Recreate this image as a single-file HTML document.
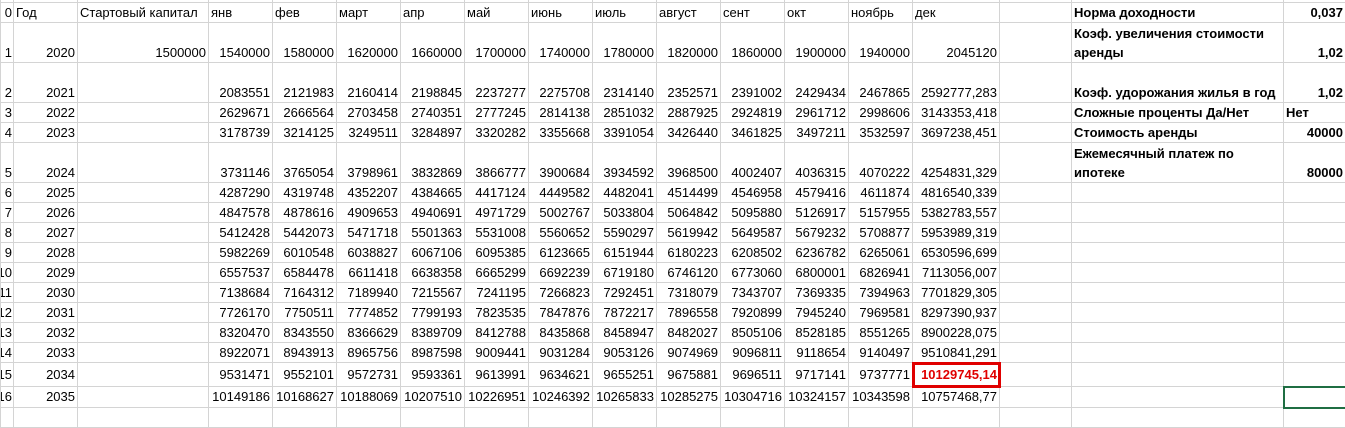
<!DOCTYPE html>
<html><head><meta charset="utf-8"><style>
body{margin:0;background:#fff;width:1345px;height:412px;overflow:hidden;position:relative;font-family:"Liberation Sans",Arial,sans-serif;font-size:13px;color:#000}
table{position:absolute;left:0;top:0;border-collapse:collapse;table-layout:fixed;width:1345px}
td{border:1px solid #d4d4d4;padding:0 2px 1px 2px;vertical-align:bottom;white-space:nowrap;overflow:hidden;text-align:right;line-height:16px}
td.l{text-align:left}
td.n{direction:rtl;text-align:right;padding:0 1px 1px 0}
td.b{font-weight:bold}
td.two{line-height:19px;padding-bottom:0}
tr.t td{height:2px;padding:0;border-top:none}
tr.s td{height:18px}
tr.d td{height:38px}
tr.r td{height:18px}
tr.r15 td{height:20px;padding-bottom:3px}
tr.r16 td{height:18px;padding-bottom:2px}
td.redtxt{color:#e00000;font-weight:bold;outline:3px solid #e00000;outline-offset:-2px}
td.sel{outline:2px solid #1f6e43;outline-offset:-1px}
</style></head><body>
<table>
<colgroup><col style="width:13px"><col style="width:64px"><col style="width:131px"><col style="width:64px"><col style="width:64px"><col style="width:64px"><col style="width:64px"><col style="width:64px"><col style="width:64px"><col style="width:64px"><col style="width:64px"><col style="width:64px"><col style="width:64px"><col style="width:64px"><col style="width:87px"><col style="width:72px"><col style="width:212px"><col style="width:62px"></colgroup>
<tr class="t"><td></td><td></td><td></td><td></td><td></td><td></td><td></td><td></td><td></td><td></td><td></td><td></td><td></td><td></td><td></td><td></td><td></td><td></td></tr>
<tr class="s"><td class="n">0</td><td class="l">Год</td><td class="l">Стартовый капитал</td><td class="l">янв</td><td class="l">фев</td><td class="l">март</td><td class="l">апр</td><td class="l">май</td><td class="l">июнь</td><td class="l">июль</td><td class="l">август</td><td class="l">сент</td><td class="l">окт</td><td class="l">ноябрь</td><td class="l">дек</td><td></td><td class="l b">Норма доходности</td><td class="b">0,037</td></tr>
<tr class="d"><td class="n">1</td><td>2020</td><td>1500000</td><td>1540000</td><td>1580000</td><td>1620000</td><td>1660000</td><td>1700000</td><td>1740000</td><td>1780000</td><td>1820000</td><td>1860000</td><td>1900000</td><td>1940000</td><td>2045120</td><td></td><td class="l b two">Коэф. увеличения стоимости<br>аренды</td><td class="b">1,02</td></tr>
<tr class="d"><td class="n">2</td><td>2021</td><td></td><td>2083551</td><td>2121983</td><td>2160414</td><td>2198845</td><td>2237277</td><td>2275708</td><td>2314140</td><td>2352571</td><td>2391002</td><td>2429434</td><td>2467865</td><td>2592777,283</td><td></td><td class="l b">Коэф. удорожания жилья в год</td><td class="b">1,02</td></tr>
<tr class="s"><td class="n">3</td><td>2022</td><td></td><td>2629671</td><td>2666564</td><td>2703458</td><td>2740351</td><td>2777245</td><td>2814138</td><td>2851032</td><td>2887925</td><td>2924819</td><td>2961712</td><td>2998606</td><td>3143353,418</td><td></td><td class="l b">Сложные проценты Да/Нет</td><td class="l b">Нет</td></tr>
<tr class="s"><td class="n">4</td><td>2023</td><td></td><td>3178739</td><td>3214125</td><td>3249511</td><td>3284897</td><td>3320282</td><td>3355668</td><td>3391054</td><td>3426440</td><td>3461825</td><td>3497211</td><td>3532597</td><td>3697238,451</td><td></td><td class="l b">Стоимость аренды</td><td class="b">40000</td></tr>
<tr class="d"><td class="n">5</td><td>2024</td><td></td><td>3731146</td><td>3765054</td><td>3798961</td><td>3832869</td><td>3866777</td><td>3900684</td><td>3934592</td><td>3968500</td><td>4002407</td><td>4036315</td><td>4070222</td><td>4254831,329</td><td></td><td class="l b two">Ежемесячный платеж по<br>ипотеке</td><td class="b">80000</td></tr>
<tr class="r"><td class="n">6</td><td>2025</td><td></td><td>4287290</td><td>4319748</td><td>4352207</td><td>4384665</td><td>4417124</td><td>4449582</td><td>4482041</td><td>4514499</td><td>4546958</td><td>4579416</td><td>4611874</td><td>4816540,339</td><td></td><td></td><td></td></tr>
<tr class="r"><td class="n">7</td><td>2026</td><td></td><td>4847578</td><td>4878616</td><td>4909653</td><td>4940691</td><td>4971729</td><td>5002767</td><td>5033804</td><td>5064842</td><td>5095880</td><td>5126917</td><td>5157955</td><td>5382783,557</td><td></td><td></td><td></td></tr>
<tr class="r"><td class="n">8</td><td>2027</td><td></td><td>5412428</td><td>5442073</td><td>5471718</td><td>5501363</td><td>5531008</td><td>5560652</td><td>5590297</td><td>5619942</td><td>5649587</td><td>5679232</td><td>5708877</td><td>5953989,319</td><td></td><td></td><td></td></tr>
<tr class="r"><td class="n">9</td><td>2028</td><td></td><td>5982269</td><td>6010548</td><td>6038827</td><td>6067106</td><td>6095385</td><td>6123665</td><td>6151944</td><td>6180223</td><td>6208502</td><td>6236782</td><td>6265061</td><td>6530596,699</td><td></td><td></td><td></td></tr>
<tr class="r"><td class="n">10</td><td>2029</td><td></td><td>6557537</td><td>6584478</td><td>6611418</td><td>6638358</td><td>6665299</td><td>6692239</td><td>6719180</td><td>6746120</td><td>6773060</td><td>6800001</td><td>6826941</td><td>7113056,007</td><td></td><td></td><td></td></tr>
<tr class="r"><td class="n">11</td><td>2030</td><td></td><td>7138684</td><td>7164312</td><td>7189940</td><td>7215567</td><td>7241195</td><td>7266823</td><td>7292451</td><td>7318079</td><td>7343707</td><td>7369335</td><td>7394963</td><td>7701829,305</td><td></td><td></td><td></td></tr>
<tr class="r"><td class="n">12</td><td>2031</td><td></td><td>7726170</td><td>7750511</td><td>7774852</td><td>7799193</td><td>7823535</td><td>7847876</td><td>7872217</td><td>7896558</td><td>7920899</td><td>7945240</td><td>7969581</td><td>8297390,937</td><td></td><td></td><td></td></tr>
<tr class="r"><td class="n">13</td><td>2032</td><td></td><td>8320470</td><td>8343550</td><td>8366629</td><td>8389709</td><td>8412788</td><td>8435868</td><td>8458947</td><td>8482027</td><td>8505106</td><td>8528185</td><td>8551265</td><td>8900228,075</td><td></td><td></td><td></td></tr>
<tr class="r"><td class="n">14</td><td>2033</td><td></td><td>8922071</td><td>8943913</td><td>8965756</td><td>8987598</td><td>9009441</td><td>9031284</td><td>9053126</td><td>9074969</td><td>9096811</td><td>9118654</td><td>9140497</td><td>9510841,291</td><td></td><td></td><td></td></tr>
<tr class="r15"><td class="n">15</td><td>2034</td><td></td><td>9531471</td><td>9552101</td><td>9572731</td><td>9593361</td><td>9613991</td><td>9634621</td><td>9655251</td><td>9675881</td><td>9696511</td><td>9717141</td><td>9737771</td><td class="redtxt">10129745,14</td><td></td><td></td><td></td></tr>
<tr class="r16"><td class="n">16</td><td>2035</td><td></td><td>10149186</td><td>10168627</td><td>10188069</td><td>10207510</td><td>10226951</td><td>10246392</td><td>10265833</td><td>10285275</td><td>10304716</td><td>10324157</td><td>10343598</td><td>10757468,77</td><td></td><td></td><td class="sel"></td></tr>
<tr class="r"><td></td><td></td><td></td><td></td><td></td><td></td><td></td><td></td><td></td><td></td><td></td><td></td><td></td><td></td><td></td><td></td><td></td><td></td></tr>
</table>
</body></html>
